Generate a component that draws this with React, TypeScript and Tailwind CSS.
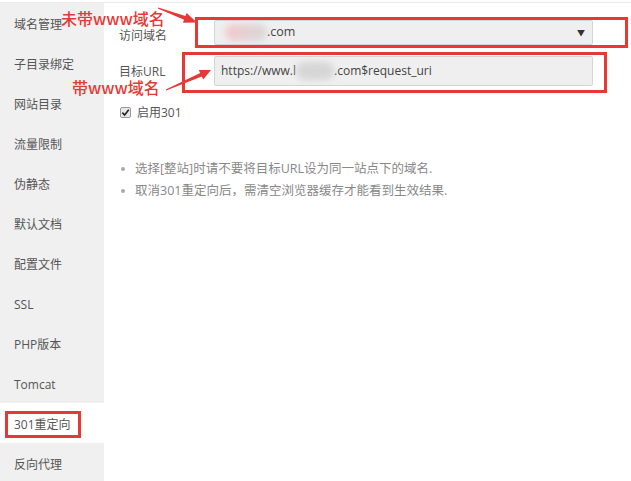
import React from "react";

const items = [
  "域名管理",
  "子目录绑定",
  "网站目录",
  "流量限制",
  "伪静态",
  "默认文档",
  "配置文件",
  "SSL",
  "PHP版本",
  "Tomcat",
  "301重定向",
  "反向代理",
];

const ui = { fontFamily: '"Open Sans","Noto Sans CJK SC",sans-serif' };
const cjk = { fontFamily: '"Noto Sans CJK SC","Noto Sans",sans-serif' };

export default function App() {
  return (
    <div className="relative w-[631px] h-[481px] overflow-hidden bg-white" style={ui}>
      <div className="h-[3px] border-b border-[#ececec]" />
      <div className="flex h-[478px]">
        {/* sidebar */}
        <div className="w-[104px] shrink-0 bg-[#f0f0f0]">
          {items.map((t) =>
            t === "301重定向" ? (
              <div key={t} className="h-10 bg-white flex items-center">
                <span className="ml-[5px] mt-[2px] h-[27px] w-[76px] border-[3px] border-[#e53935] pl-[6px] pt-[2px] flex items-center text-[12px] text-[#555]">
                  {t}
                </span>
              </div>
            ) : (
              <div key={t} className="h-10 flex items-center pl-[14px] pt-[3px] text-[12px] text-[#555]">
                {t}
              </div>
            )
          )}
        </div>
        {/* content */}
        <div className="flex-1 pl-[15px] pt-[17px] text-[12px] text-[#555]">
          <div className="flex items-center h-[25px]">
            <div className="w-[95px] pt-[7px]">访问域名</div>
            <div className="w-[379px] h-[25px] bg-[#efefef] border border-[#d4d4d4] rounded-[2px] flex items-center pl-[10px] pr-[7px] text-[12.5px] text-[#444]">
              <span className="w-[42px] h-[17px] rounded-full bg-[linear-gradient(90deg,#f3c9cc,#d8d8d8)] blur-[3px]" />
              <span>.com</span>
              <span className="ml-auto text-[8px] text-[#333]">▼</span>
            </div>
          </div>
          <div className="flex items-center h-[30px] mt-[11px]">
            <div className="w-[95px] pt-[1px]">目标URL</div>
            <div className="w-[379px] h-[30px] bg-[#efefef] border border-[#d4d4d4] rounded-[2px] flex items-center pl-[6px] text-[12px] text-[#444]">
              <span>https://www.l</span>
              <span className="w-[38px] h-[18px] rounded-full bg-[#d6d6d6] blur-[3px]" />
              <span>.com$request_uri</span>
            </div>
          </div>
          <div className="flex items-center mt-[18px] h-[16px]">
            <span className="w-[11px] h-[11px] ml-[1px] border border-[#999] rounded-[2px] bg-[#e8e8e8] flex items-center justify-center">
              <svg viewBox="0 0 10 10" className="w-[9px] h-[9px]">
                <path d="M1.5 5.2 L4 7.8 L8.6 2" fill="none" stroke="#222" strokeWidth="1.8" />
              </svg>
            </span>
            <span className="ml-[6px] pt-[1px] text-[12px] text-[#555]">启用301</span>
          </div>
          <ul className="mt-[38px] text-[12.5px] text-[#888]">
            <li className="flex items-center h-[22px]">
              <span className="w-[4px] h-[4px] rounded-full bg-[#aaa] ml-[2px] mr-[10px]" />
              选择[整站]时请不要将目标URL设为同一站点下的域名.
            </li>
            <li className="flex items-center h-[22px]">
              <span className="w-[4px] h-[4px] rounded-full bg-[#aaa] ml-[2px] mr-[10px]" />
              取消301重定向后，需清空浏览器缓存才能看到生效结果.
            </li>
          </ul>
        </div>
      </div>

      {/* annotations */}
      <div className="absolute left-[195px] top-[17px] w-[433px] h-[31px] border-[3px] border-[#e53935]" />
      <div className="absolute left-[182px] top-[52px] w-[425px] h-[41px] border-[3px] border-[#e53935]" />
      <div className="absolute left-[61px] top-[8px] text-[16px] leading-[20px] font-medium text-[#e53935]" style={cjk}>
        未带www域名
      </div>
      <div className="absolute left-[72px] top-[77px] text-[16px] leading-[20px] font-medium text-[#e53935]" style={cjk}>
        带www域名
      </div>
      <svg className="absolute left-0 top-0" width="631" height="481" viewBox="0 0 631 481">
        <polygon
          fill="#e53935"
          points="157.8,8.5 184,19.8 183,22.8 197,22.5 186.6,13 185.4,16 158.2,7.5"
        />
        <polygon
          fill="#e53935"
          points="166.2,90.5 201.8,76.6 203.2,79.6 211,70 198.8,70 200.2,73 165.8,89.5"
        />
      </svg>
    </div>
  );
}
